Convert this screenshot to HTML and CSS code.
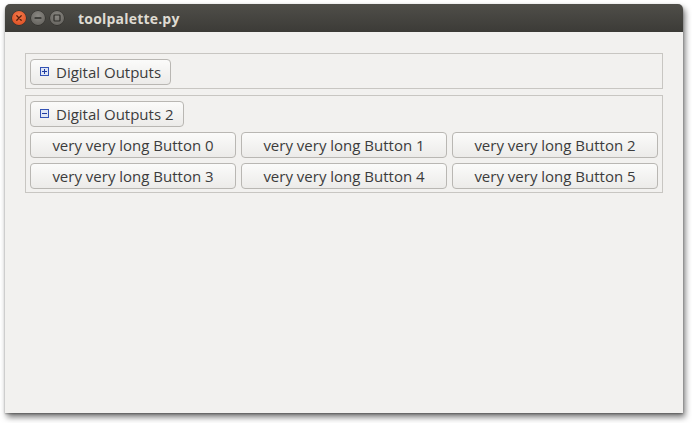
FILE: index.html
```html
<!DOCTYPE html>
<html>
<head>
<meta charset="utf-8">
<link rel="stylesheet" href="styles.css">
</head>
<body>
<div class="window">
  <div class="titlebar">
    <div class="controls">
      <span class="wbtn close"><svg width="14" height="14" viewBox="0 0 14 14"><path d="M4.8 4.8 L9.2 9.2 M9.2 4.8 L4.8 9.2" stroke="#5a1f0c" stroke-width="1.3" stroke-linecap="round"/></svg></span>
      <span class="wbtn"><svg width="14" height="14" viewBox="0 0 14 14"><rect x="3.5" y="6.3" width="7" height="1.4" rx="0.5" fill="#2d2c29"/></svg></span>
      <span class="wbtn"><svg width="14" height="14" viewBox="0 0 14 14"><rect x="4" y="4" width="6" height="6" rx="0.8" fill="none" stroke="#2d2c29" stroke-width="1.2"/></svg></span>
    </div>
    <div class="title">toolpalette.py</div>
  </div>
  <div class="content">
    <div class="group">
      <button class="header"><svg class="ico" width="9" height="9" viewBox="0 0 9 9"><rect x="0.5" y="0.5" width="8" height="8" fill="#dfe6f5" stroke="#3453b5"/><path d="M2 4.5 H7 M4.5 2 V7" stroke="#1f3aa0" stroke-width="1"/></svg>Digital Outputs</button>
    </div>
    <div class="group">
      <button class="header"><svg class="ico" width="9" height="9" viewBox="0 0 9 9"><rect x="0.5" y="0.5" width="8" height="8" fill="#dfe6f5" stroke="#3453b5"/><path d="M2 4.5 H7" stroke="#1f3aa0" stroke-width="1"/></svg>Digital Outputs 2</button>
      <div class="grid">
        <button class="btn">very very long Button 0</button>
        <button class="btn">very very long Button 1</button>
        <button class="btn">very very long Button 2</button>
        <button class="btn">very very long Button 3</button>
        <button class="btn">very very long Button 4</button>
        <button class="btn">very very long Button 5</button>
      </div>
    </div>
  </div>
</div>
</body>
</html>
```
FILE: styles.css
```css
html, body {
  margin: 0;
  padding: 0;
  background: #ffffff;
  height: 100%;
}
body {
  box-sizing: border-box;
  padding: 4px 0 0 5px;
  font-family: "Open Sans", "Noto Sans", sans-serif;
}
.window {
  width: 678px;
  height: 409px;
  background: #f2f1ef;
  border-radius: 5px 5px 0 0;
  box-shadow: 2px 4px 6px rgba(0,0,0,0.55), 0 1px 2px rgba(0,0,0,0.3);
  display: flex;
  flex-direction: column;
}
.titlebar {
  height: 28px;
  background: linear-gradient(#4f4e49, #3c3b37);
  border-radius: 5px 5px 0 0;
  display: flex;
  align-items: center;
  padding-left: 7px;
}
.controls {
  display: flex;
  gap: 5px;
}
.wbtn {
  width: 14px;
  height: 14px;
  border-radius: 50%;
  background: radial-gradient(circle at 50% 35%, #8a8883, #5e5c57);
  box-shadow: 0 0 0 0.5px #2b2a27;
  display: block;
}
.wbtn svg { display: block; }
.wbtn.close {
  background: radial-gradient(circle at 50% 35%, #f47a4c, #d9481c);
}
.title {
  margin-left: 14px;
  color: #dfdbd2;
  font-weight: 700;
  font-size: 14px;
  letter-spacing: 0.2px;
}
.content {
  padding: 21px 20px 0 20px;
  display: flex;
  flex-direction: column;
  gap: 6px;
}
.group {
  border: 1px solid #c8c6c2;
  padding: 5px 4px 3px 4px;
  display: flex;
  flex-direction: column;
  align-items: flex-start;
  gap: 5px;
}
button {
  font-family: "Open Sans", "Noto Sans", sans-serif;
  font-size: 15px;
  color: #3c3c3c;
  height: 26px;
  border: 1px solid #b9b7b3;
  border-radius: 4px;
  background: linear-gradient(#fbfbfa, #ecebe9);
  margin: 0;
  padding: 0 0 1px 0;
}
.header {
  display: flex;
  align-items: center;
  padding: 0 9px 1px 9px;
  gap: 7px;
}
.ico { display: block; }
.grid {
  align-self: stretch;
  display: grid;
  grid-template-columns: 1fr 1fr 1fr;
  column-gap: 5px;
  row-gap: 5px;
}
.btn {
  width: 100%;
  text-align: center;
}
```
